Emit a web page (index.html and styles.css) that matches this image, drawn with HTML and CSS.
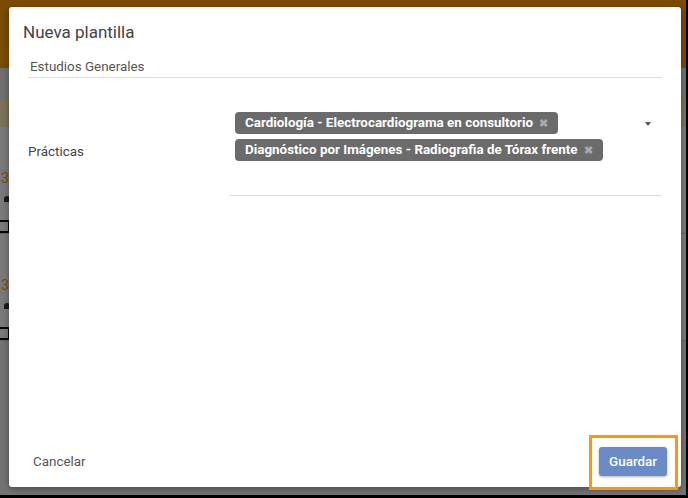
FILE: index.html
```html
<!doctype html>
<html lang="es">
<head>
    <meta charset="UTF-8" />
    <meta name="viewport" content="width=device-width, initial-scale=1.0" />
    <title>Nueva plantilla</title>
    <link rel="stylesheet" href="styles.css">
</head>
<body>
    <div class="screen">
        <!-- page behind the modal -->
        <div class="page">
            <div class="topbar"></div>
            <div class="subbar"></div>
            <div class="tabbar"></div>
            <div class="item">
                <span class="item-num">30</span>
                <span class="item-user"></span>
                <span class="item-check"></span>
            </div>
            <div class="item">
                <span class="item-num">30</span>
                <span class="item-user"></span>
                <span class="item-check"></span>
            </div>
        </div>

        <div class="overlay">
            <div class="dialog">
                <h1 class="dialog-title">Nueva plantilla</h1>

                <div class="dialog-body">
                    <div class="field">
                        <span class="field-value">Estudios Generales</span>
                    </div>

                    <div class="field-row">
                        <label class="row-label">Prácticas</label>
                        <div class="chips-box">
                            <div class="chips">
                                <span class="chip">Cardiología - Electrocardiograma en consultorio <span class="chip-x">&#10006;</span></span>
                                <span class="chip">Diagnóstico por Imágenes - Radiografia de Tórax frente <span class="chip-x">&#10006;</span></span>
                            </div>
                            <span class="caret"></span>
                        </div>
                    </div>
                </div>

                <div class="dialog-actions">
                    <button class="btn-flat">Cancelar</button>
                    <button class="btn-save">Guardar</button>
                </div>
            </div>
            <div class="highlight"></div>
        </div>
    </div>
</body>
</html>
```

FILE: styles.css
```css
body {
    margin: 0;
    padding: 0;
    background-color: #000;
    font-family: Roboto, 'Liberation Sans', Arial, sans-serif;
}

.screen {
    position: relative;
    width: 686px;
    height: 495px;
    overflow: hidden;
    background-color: #e6e6e6;
}

/* Page under the overlay */
.page {
    display: flex;
    flex-direction: column;
}

.topbar {
    height: 68px;
    background-color: #f59600;
}

.subbar {
    height: 32px;
    background-color: #dedede;
}

.tabbar {
    height: 27px;
    background-color: #fbe3b3;
}

.item {
    display: flex;
    flex-direction: column;
    height: 107px;
    padding: 45px 0 0 1px;
    box-sizing: border-box;
    background-color: #f2f2f2;
    border-bottom: 1px solid #c8c8c8;
}

.item-num {
    color: #f59600;
    font-size: 14px;
    line-height: 12px;
}

.item-user {
    width: 6px;
    height: 8px;
    margin: 12px 0 0 3px;
    border-radius: 3px 3px 0 0;
    background-color: #333;
}

.item-check {
    width: 10px;
    height: 12px;
    margin: 18px 0 0 -3px;
    border: 2px solid #111;
    border-left: none;
}

/* Modal */
.overlay {
    position: absolute;
    inset: 0;
    background-color: rgba(0, 0, 0, 0.5);
    padding: 7px 5px 8px 9px;
    box-sizing: border-box;
    display: flex;
}

.dialog {
    flex: 1;
    display: flex;
    flex-direction: column;
    background-color: #fff;
    border-radius: 3px;
    box-shadow: 0 2px 6px rgba(0, 0, 0, 0.35);
}

.dialog-title {
    margin: 0;
    padding: 13px 0 0 14px;
    font-size: 17px;
    font-weight: 400;
    line-height: 24px;
    color: #444;
}

.dialog-body {
    flex: 1;
    padding: 0 19px;
}

.field {
    margin-top: 12px;
    height: 21px;
    border-bottom: 1px solid #ddd;
    padding-left: 2px;
}

.field-value {
    font-size: 13.4px;
    line-height: 21px;
    color: #555;
}

.field-row {
    display: flex;
    align-items: center;
    margin-top: 29px;
}

.row-label {
    width: 202px;
    font-size: 13.4px;
    color: #444;
}

.chips-box {
    flex: 1;
    position: relative;
    height: 83px;
    border-bottom: 1px solid #ddd;
    padding: 5px 0 0 5px;
}

.chips {
    display: flex;
    flex-direction: column;
    align-items: flex-start;
    gap: 5px;
}

.chip {
    display: inline-block;
    height: 22px;
    line-height: 22px;
    padding: 0 10px;
    border-radius: 4px;
    background-color: #6b6b6b;
    color: #fff;
    font-size: 13.4px;
    font-weight: 700;
    white-space: nowrap;
}

.chip-x {
    color: #a8a8a8;
    font-size: 11px;
    margin-left: 3px;
}

.caret {
    position: absolute;
    top: 15px;
    right: 11px;
    width: 0;
    height: 0;
    border-left: 3.5px solid transparent;
    border-right: 3.5px solid transparent;
    border-top: 4px solid #555;
}

.dialog-actions {
    display: flex;
    justify-content: space-between;
    align-items: center;
    padding: 0 14px 10px 15px;
}

.btn-flat {
    background: none;
    border: none;
    padding: 8px 9px;
    font-family: inherit;
    font-size: 13.4px;
    color: #555;
}

.btn-save {
    background-color: #6a8bc5;
    border: none;
    border-radius: 3px;
    padding: 0 10px;
    height: 29px;
    font-family: inherit;
    font-size: 13.4px;
    font-weight: 500;
    color: #fff;
    box-shadow: 0 1px 3px rgba(0, 0, 0, 0.3);
}

.highlight {
    position: absolute;
    left: 589px;
    top: 435px;
    width: 83px;
    height: 49px;
    border: 3px solid #ff9800;
}
```
